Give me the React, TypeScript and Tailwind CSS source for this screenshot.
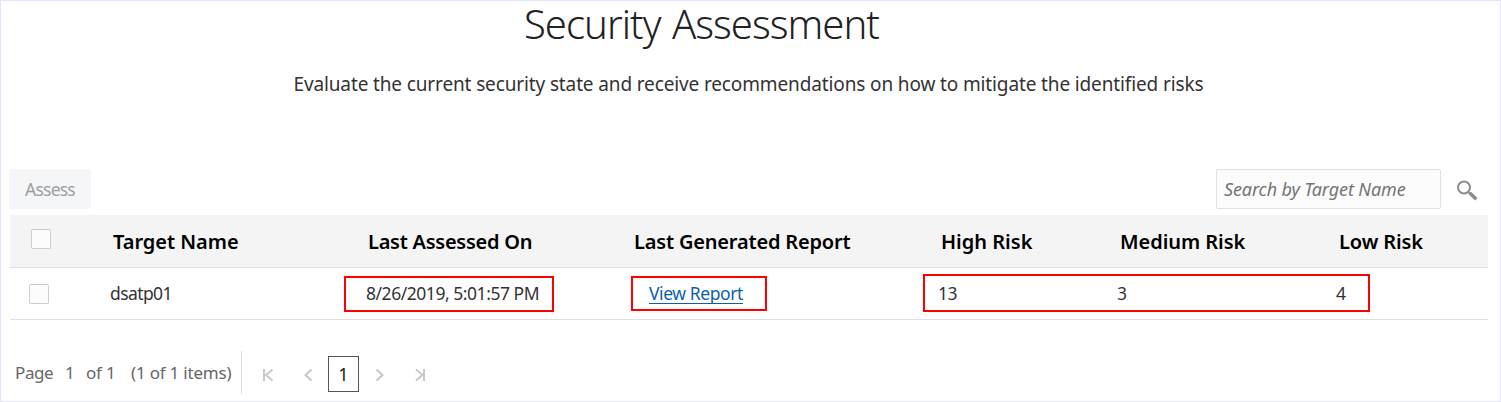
import type { ReactNode } from "react";

function Checkbox() {
  return <span className="block size-5 rounded-[2px] border border-[#cfcfcf] border-t-[#c6c6c6] bg-[#fcfcfc]" />;
}

function Head({ children, className }: { children: ReactNode; className: string }) {
  return <div className={`whitespace-nowrap text-[20px] leading-[27px] font-semibold text-black ${className}`}>{children}</div>;
}

function PagerIcon({ d, className }: { d: string; className: string }) {
  return (
    <svg className={className} width="12" height="14" viewBox="0 0 12 14" fill="none" stroke="#c8c8c8" strokeWidth="2">
      <path d={d} />
    </svg>
  );
}

export default function App() {
  return (
    <div className="flex h-[402px] w-[1501px] flex-col overflow-hidden border border-[#e3e3fb] bg-white font-['Noto_Sans','Open_Sans',sans-serif] text-[#333]">
      <header className="flex flex-col items-start whitespace-nowrap">
        <h1 className="ml-[523px] text-[40px] leading-[46px] font-light tracking-[-0.97px] [word-spacing:2px] text-[#222]">Security Assessment</h1>
        <p className="mt-[24px] ml-[292.5px] text-[19px] leading-[26px] tracking-[-0.13px]">
          Evaluate the current security state and receive recommendations on how to mitigate the identified risks
        </p>
      </header>

      <div className="mt-[72px] ml-2 flex h-10 items-center">
        <button className="h-10 w-[82px] rounded-[3px] bg-[#f5f6f7] text-[17.5px] tracking-[-0.8px] text-[#9e9e9e]">Assess</button>
        <div className="ml-[1125px] flex h-10 w-[225px] items-center rounded-[2px] border border-[#dfe1e3] bg-[#fcfcfc] pl-[7px] text-[18px] tracking-[-0.12px] whitespace-nowrap text-[#757575] italic">
          Search by Target Name
        </div>
        <svg className="mt-[3px] ml-[14px]" width="24" height="24" viewBox="0 0 24 24" fill="none" stroke="#8a8d90">
          <circle cx="9" cy="8.5" r="6" strokeWidth="2" />
          <path d="M13.2 12.7L15.5 15" strokeWidth="2" />
          <path d="M14.8 14L21.3 20.2" strokeWidth="3.6" />
        </svg>
      </div>

      <div className="mt-[6px] ml-[9px] w-[1478px]">
        <div className="flex h-[53px] items-center border-b border-[#e0e0e0] bg-[#f4f4f4]">
          <div className="w-[103px] pb-[4px] pl-[21px]"><Checkbox /></div>
          <Head className="w-[255px] tracking-[-0.03px]">Target Name</Head>
          <Head className="w-[266px] tracking-[-0.26px]">Last Assessed On</Head>
          <Head className="w-[307px] tracking-[-0.18px]">Last Generated Report</Head>
          <Head className="w-[179px] tracking-[0px]">High Risk</Head>
          <Head className="w-[219px] tracking-[-0.05px]">Medium Risk</Head>
          <Head className="tracking-[-0.1px]">Low Risk</Head>
        </div>
        <div className="flex h-[52px] items-center border-b border-[#e0e0e0] text-[17.5px] leading-6 whitespace-nowrap">
          <div className="w-[100px] pl-[19px]"><Checkbox /></div>
          <div className="w-[234px] pb-[2px] tracking-[-0.6px]">dsatp01</div>
          <div className="mt-px flex h-9 w-[210px] items-center border-2 border-[#ff0000] pb-[2px] pl-5 tracking-[-0.46px]">8/26/2019, 5:01:57 PM</div>
          <div className="ml-[77px] flex h-[35px] w-[136px] items-center border-2 border-[#ff0000] pl-4">
            <a className="border-b border-[#0b5fae] text-[17.5px] leading-[19px] tracking-[-0.41px] text-[#0b5fae]">View Report</a>
          </div>
          <div className="mb-px ml-[156px] flex h-[38px] w-[447px] items-center border-2 border-[#ff0000] pl-[13px]">
            <span className="w-[179px] tracking-[-0.5px]">13</span>
            <span className="w-[219px]">3</span>
            <span>4</span>
          </div>
        </div>
      </div>

      <div className="mt-[30px] ml-[14px] flex h-[44px] items-center text-[17px] leading-6 whitespace-nowrap text-[#666]">
        <span className="w-[50px] pt-px tracking-[-0.4px]">Page</span>
        <span className="w-[21px] pt-px">1</span>
        <span className="w-[45px] pt-px tracking-[-0.2px]">of 1</span>
        <span className="w-[110px] pt-px tracking-[-0.2px]">(1 of 1 items)</span>
        <span className="h-[43px] w-px bg-[#dedede]" />
        <PagerIcon className="mt-[6px] ml-5" d="M2 1V13M10.5 1.5L4 7L10.5 12.5" />
        <PagerIcon className="mt-[6px] ml-[28px]" d="M9.5 1.5L3.5 7L9.5 12.5" />
        <span className="mt-[4px] ml-[14px] flex h-9 w-[31px] items-center justify-center border border-[#555] text-[18px] text-[#222]">1</span>
        <PagerIcon className="mt-[5px] ml-[14px]" d="M3.5 1.5L9.5 7L3.5 12.5" />
        <PagerIcon className="mt-[5px] ml-[30px]" d="M9 1V13M1 1.5L7.5 7L1 12.5" />
      </div>
    </div>
  );
}
